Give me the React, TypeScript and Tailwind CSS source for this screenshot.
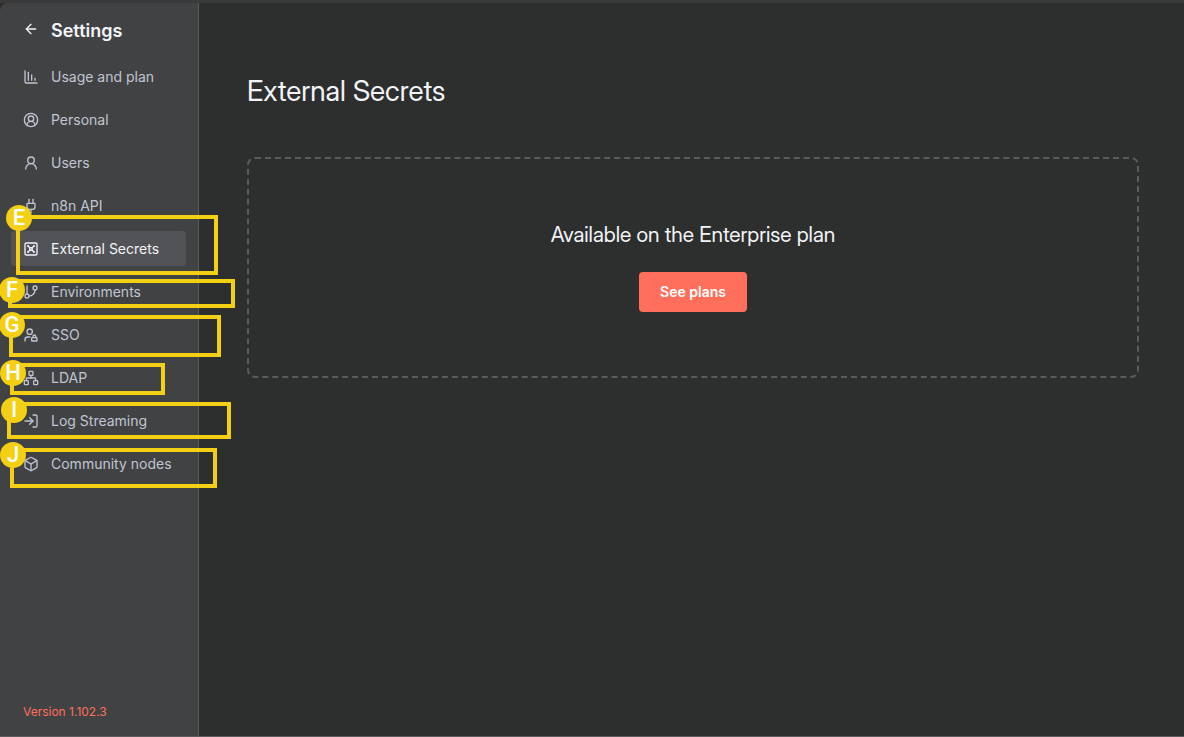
import type { ComponentType } from 'react';
import {
  ArrowLeft,
  Box,
  ChartColumnDecreasing,
  CircleUserRound,
  GitBranch,
  LogIn,
  Network,
  Plug,
  UserLock,
  UserRound,
  Vault,
} from 'lucide-react';
import clsx from 'clsx';

type NavItem = {
  label: string;
  href: string;
  icon: ComponentType<{ size?: number; strokeWidth?: number; className?: string }>;
};

const navItems: NavItem[] = [
  { label: 'Usage and plan', href: '#usage', icon: ChartColumnDecreasing },
  { label: 'Personal', href: '#personal', icon: CircleUserRound },
  { label: 'Users', href: '#users', icon: UserRound },
  { label: 'n8n API', href: '#api', icon: Plug },
  { label: 'External Secrets', href: '#external-secrets', icon: Vault },
  { label: 'Environments', href: '#environments', icon: GitBranch },
  { label: 'SSO', href: '#sso', icon: UserLock },
  { label: 'LDAP', href: '#ldap', icon: Network },
  { label: 'Log Streaming', href: '#log-streaming', icon: LogIn },
  { label: 'Community nodes', href: '#community-nodes', icon: Box },
];

// Callouts drawn over the sidebar: a frame plus a lettered badge
const callouts = [
  {
    letter: 'E',
    frame: 'left-[16px] top-[215px] w-[202px] h-[60px]',
    badge: 'left-[6px] top-[205px]',
  },
  {
    letter: 'F',
    frame: 'left-[8px] top-[279px] w-[227px] h-[29px]',
    badge: 'left-[-1px] top-[277px]',
  },
  {
    letter: 'G',
    frame: 'left-[9px] top-[315px] w-[212px] h-[42px]',
    badge: 'left-[-1px] top-[312px]',
  },
  {
    letter: 'H',
    frame: 'left-[10px] top-[363px] w-[155px] h-[32px]',
    badge: 'left-0 top-[360px]',
  },
  {
    letter: 'I',
    frame: 'left-[7px] top-[402px] w-[224px] h-[37px]',
    badge: 'left-[1px] top-[397px]',
  },
  {
    letter: 'J',
    frame: 'left-[10px] top-[448px] w-[207px] h-[40px]',
    badge: 'left-0 top-[442px]',
  },
];

const Sidebar = ({ active }: { active: string }) => {
  return (
    <aside className="flex w-[199px] shrink-0 flex-col rounded-tl-lg border-r border-[#5a5b5d] bg-[#414244]">
      <a href="#home" className="flex items-start gap-3 px-[23px] pt-4 text-[#f2f4f8]">
        <ArrowLeft size={16} strokeWidth={2} className="mt-0.5" />
        <span className="text-lg leading-6 font-semibold">Settings</span>
      </a>
      <nav className="mt-4 flex flex-col gap-2 pr-3 pl-[11px]">
        {navItems.map(({ label, href, icon: Icon }) => (
          <a
            key={label}
            href={href}
            className={clsx(
              'flex h-[35px] items-center gap-3 rounded px-3 text-sm whitespace-nowrap',
              label === active ? 'bg-[#525356] text-[#f2f4f8]' : 'text-[#c0c5d2]'
            )}
          >
            <Icon size={16} strokeWidth={2} className="shrink-0" />
            {label}
          </a>
        ))}
      </nav>
      <a href="#about" className="mt-auto px-[23px] pb-4 text-xs leading-4 text-[#ff6f5c]">
        Version 1.102.3
      </a>
    </aside>
  );
};

const Callouts = () => {
  return (
    <div className="pointer-events-none">
      {callouts.map(({ letter, frame, badge }) => (
        <div key={letter}>
          <div className={clsx('absolute border-4 border-[#f3d014]', frame)} />
          <div
            className={clsx(
              "absolute flex size-[26px] items-center justify-center rounded-full bg-[#f3d014] font-['Roboto',sans-serif] text-[22px] leading-6 font-medium text-white",
              badge
            )}
          >
            {letter}
          </div>
        </div>
      ))}
    </div>
  );
};

const App = () => {
  return (
    <div className="relative overflow-hidden font-['Inter',sans-serif]">
      <div className="flex min-h-screen border-t-[3px] border-b border-t-[#3a3a3a] border-b-[#5c5c5e] bg-[#2d2e2e]">
        <Sidebar active="External Secrets" />
        <main className="min-w-0 flex-1 pt-[70px] pr-[45px] pl-12 font-['Inter_Display','Inter',sans-serif]">
          <h1 className="text-[28px] leading-9 text-[#f2f4f8]">External Secrets</h1>
          <section className="mt-12 flex flex-col items-center rounded-lg border-2 border-dashed border-[#5a5b5b] pt-[62px] pb-16">
            <h2 className="text-[21px] leading-7 text-[#f2f4f8]">
              Available on the Enterprise plan
            </h2>
            <button
              type="button"
              className="mt-[23px] h-10 rounded bg-[#ff6f5c] px-[21px] font-['Inter',sans-serif] text-sm font-semibold text-white"
            >
              See plans
            </button>
          </section>
        </main>
      </div>
      <Callouts />
    </div>
  );
};

export default App;
